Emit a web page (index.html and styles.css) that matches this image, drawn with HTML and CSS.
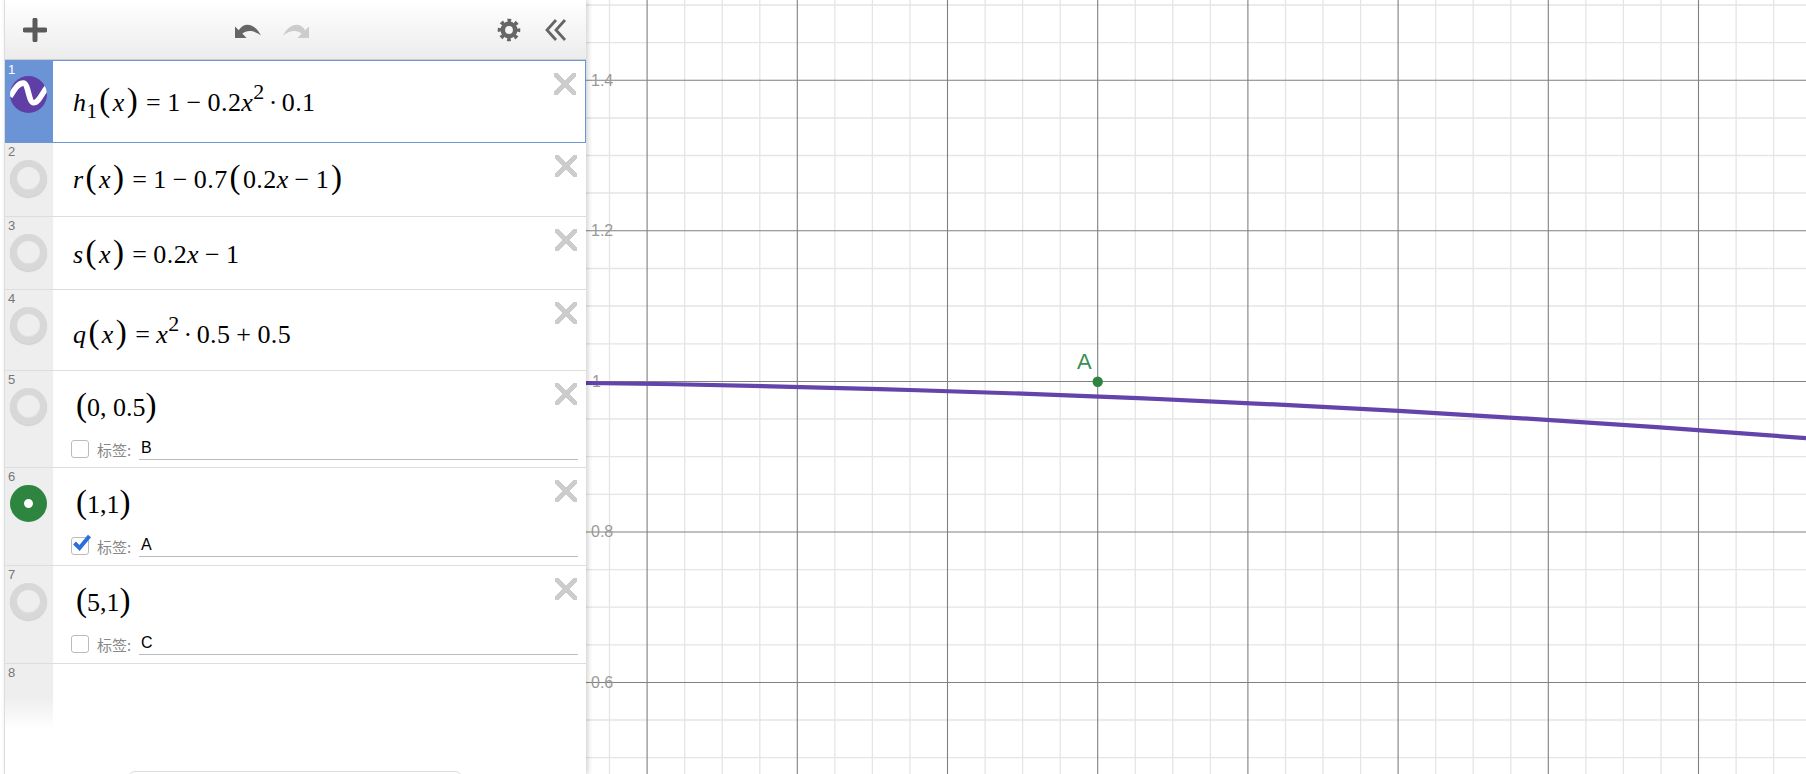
FILE: index.html
```html
<!DOCTYPE html>
<html lang="zh">
<head>
    <meta charset="UTF-8">
    <title>GeoGebra</title>
    <link rel="stylesheet" href="styles.css">
</head>
<body>
    <div class="app">
        <aside class="panel">
            <div class="toolbar">
                <svg class="tool-add" width="24" height="24" viewBox="0 0 24 24"><path d="M12 2V22M2 12H22" stroke="#5a5a5a" stroke-width="5" stroke-linecap="round"/></svg>
                <div class="tool-history">
                    <svg width="28" height="18" viewBox="0 0 28 18"><path d="M1 5.5V17H12.5L8.3 12.6C13 8.8 19.5 9 27 14.5C21.5 3.5 11 -0.5 4.8 9.2Z" fill="#666"/></svg>
                    <svg width="28" height="18" viewBox="0 0 28 18"><path d="M27 5.5V17H15.5L19.7 12.6C15 8.8 8.5 9 1 14.5C6.5 3.5 17 -0.5 23.2 9.2Z" fill="#ccc"/></svg>
                </div>
                <div class="tool-right">
                    <svg width="24" height="24" viewBox="0 0 24 24"><circle cx="12" cy="12" r="6.2" fill="none" stroke="#666" stroke-width="4.6"/><circle cx="12" cy="12" r="9.6" fill="none" stroke="#666" stroke-width="3.4" stroke-dasharray="3.77 3.77" stroke-dashoffset="1.9"/></svg>
                    <svg width="22" height="24" viewBox="0 0 22 24"><path d="M11 2L2 12L11 22M20 2L11 12L20 22" fill="none" stroke="#666" stroke-width="2.8"/></svg>
                </div>
            </div>

            <div class="row row-active h-83">
                <div class="gutter"><span class="num">1</span>
                    <span class="marble marble-func"><svg width="37" height="37" viewBox="0 0 36 36"><path d="M0 20C5 12 8 7 13 7C18 7 18 26 23 26C28 26 31 17 36 11" fill="none" stroke="#fff" stroke-width="5.5"/></svg></span>
                </div>
                <div class="body pad-27">
                    <div class="math"><i>h</i><sub>1</sub><span class="p">(</span><i>x</i><span class="p">)</span><span class="op">=</span>1<span class="op">−</span>0.2<i>x</i><sup>2</sup><span class="dot">·</span>0.1</div>
                </div>
                <span class="del"></span>
            </div>
            <div class="row h-74">
                <div class="gutter"><span class="num">2</span><span class="marble"></span></div>
                <div class="body pad-22">
                    <div class="math"><i>r</i><span class="p">(</span><i>x</i><span class="p">)</span><span class="op">=</span>1<span class="op">−</span>0.7<span class="p">(</span>0.2<i>x</i><span class="op">−</span>1<span class="p">)</span></div>
                </div>
                <span class="del"></span>
            </div>
            <div class="row h-73">
                <div class="gutter"><span class="num">3</span><span class="marble"></span></div>
                <div class="body pad-23">
                    <div class="math"><i>s</i><span class="p">(</span><i>x</i><span class="p">)</span><span class="op">=</span>0.2<i>x</i><span class="op">−</span>1</div>
                </div>
                <span class="del"></span>
            </div>
            <div class="row h-81">
                <div class="gutter"><span class="num">4</span><span class="marble"></span></div>
                <div class="body pad-30">
                    <div class="math"><i>q</i><span class="p">(</span><i>x</i><span class="p">)</span><span class="op">=</span><i>x</i><sup>2</sup><span class="dot">·</span>0.5<span class="op">+</span>0.5</div>
                </div>
                <span class="del"></span>
            </div>
            <div class="row h-97">
                <div class="gutter"><span class="num">5</span><span class="marble"></span></div>
                <div class="body pad-22">
                    <div class="math point"><span class="p">(</span>0,&nbsp;0.5<span class="p">)</span></div>
                    <div class="caption"><span class="check"></span><span class="caption-text">标签:</span><span class="caption-input">B</span></div>
                </div>
                <span class="del"></span>
            </div>
            <div class="row h-98">
                <div class="gutter"><span class="num">6</span><span class="marble marble-on"></span></div>
                <div class="body pad-22">
                    <div class="math point"><span class="p">(</span>1,1<span class="p">)</span></div>
                    <div class="caption"><span class="check"><svg class="tick" width="20" height="18" viewBox="0 0 20 18"><path d="M2.5 9L7.5 14L17.5 2" fill="none" stroke="#2b6fdc" stroke-width="4"/></svg></span><span class="caption-text">标签:</span><span class="caption-input">A</span></div>
                </div>
                <span class="del"></span>
            </div>
            <div class="row h-98">
                <div class="gutter"><span class="num">7</span><span class="marble"></span></div>
                <div class="body pad-22">
                    <div class="math point"><span class="p">(</span>5,1<span class="p">)</span></div>
                    <div class="caption"><span class="check"></span><span class="caption-text">标签:</span><span class="caption-input">C</span></div>
                </div>
                <span class="del"></span>
            </div>
            <div class="row-last">
                <div class="gutter gutter-fade"><span class="num">8</span></div>
            </div>
            <div class="help-btn"></div>
        </aside>

        <main class="graph">
            <svg class="plot" width="1220" height="774" viewBox="586 0 1220 774">
                <path class="grid-minor" d="M609.5 0V774M684.7 0V774M722.2 0V774M759.8 0V774M834.9 0V774M872.4 0V774M910 0V774M985.1 0V774M1022.6 0V774M1060.2 0V774M1135.3 0V774M1172.8 0V774M1210.4 0V774M1285.5 0V774M1323 0V774M1360.6 0V774M1435.7 0V774M1473.2 0V774M1510.8 0V774M1585.9 0V774M1623.4 0V774M1661 0V774M1736.1 0V774M1773.6 0V774"/>
                <path class="grid-minor" d="M586 5H1806M586 42.7H1806M586 118H1806M586 155.5H1806M586 193H1806M586 268.5H1806M586 306H1806M586 343.8H1806M586 419H1806M586 456.7H1806M586 494.3H1806M586 569.6H1806M586 607.2H1806M586 644.8H1806M586 720H1806M586 757.7H1806"/>
                <path class="grid-major" d="M647.1 0V774M797.3 0V774M947.5 0V774M1097.7 0V774M1247.9 0V774M1398.1 0V774M1548.3 0V774M1698.5 0V774"/>
                <path class="grid-major" d="M586 80.3H1806M586 230.8H1806M586 381.5H1806M586 532H1806M586 682.5H1806"/>
                <text class="axis-label" x="591" y="86">1.4</text>
                <text class="axis-label" x="591" y="236">1.2</text>
                <text class="axis-label" x="592" y="387">1</text>
                <text class="axis-label" x="591" y="537">0.8</text>
                <text class="axis-label" x="591" y="688">0.6</text>
                <path class="curve" d="M586 383Q1196 390.8 1806 438.2"/>
                <circle class="pt" cx="1097.7" cy="381.7" r="5.2"/>
                <text class="pt-label" x="1077" y="369">A</text>
            </svg>
        </main>
    </div>
</body>
</html>
```

FILE: styles.css
```css
html, body {
    margin: 0;
    padding: 0;
    height: 100%;
    background: #fff;
    overflow: hidden;
}
.app {
    display: flex;
    width: 1806px;
    height: 774px;
    padding-left: 4px;
    box-sizing: border-box;
}
.panel {
    position: relative;
    z-index: 2;
    width: 582px;
    flex: none;
    height: 774px;
    overflow: hidden;
    background: #fff;
    border-left: 1px solid #ddd;
    box-sizing: border-box;
    box-shadow: 2px 0 5px rgba(0, 0, 0, 0.18);
}

/* toolbar */
.toolbar {
    display: flex;
    align-items: center;
    height: 60px;
    box-sizing: border-box;
    padding: 0 19px 0 18px;
    background: linear-gradient(#fff, #ececec);
    border-bottom: 1px solid #ccc;
}
.tool-add {
    flex: none;
}
.tool-history {
    display: flex;
    gap: 20px;
    margin-left: 187px;
}
.tool-right {
    display: flex;
    align-items: center;
    gap: 24px;
    margin-left: auto;
}

/* rows */
.row {
    position: relative;
    display: flex;
    box-sizing: border-box;
    border-bottom: 1px solid #ddd;
}
.h-83 { height: 83px; }
.h-74 { height: 74px; }
.h-73 { height: 73px; }
.h-81 { height: 81px; }
.h-97 { height: 97px; }
.h-98 { height: 98px; }
.pad-22 { padding-top: 22px; }
.pad-23 { padding-top: 23px; }
.pad-27 { padding-top: 27px; }
.pad-30 { padding-top: 30px; }

.row-active {
    border: 1px solid #6c95d6;
    margin-left: -1px;
}
.gutter {
    position: relative;
    flex: none;
    width: 48px;
    background: #eeeeee;
}
.row-active .gutter {
    background: #6a94d6;
    width: 48px;
}
.gutter-fade {
    height: 66px;
    background: linear-gradient(#eee 50%, #fff);
}
.num {
    display: block;
    padding: 2px 0 0 3px;
    font-family: "Liberation Sans", Arial, sans-serif;
    font-size: 13px;
    line-height: 13px;
    color: #777;
}
.row-active .num {
    color: #fff;
}
.marble {
    display: block;
    width: 37px;
    height: 37px;
    margin: 2px 0 0 5px;
    box-sizing: border-box;
    border-radius: 50%;
    border: 7px solid #d8d8d8;
    background: #eee;
    box-shadow: inset 0 -1px 1px #ddd, 0 1px 1px #ccc;
}
.marble-func {
    margin-top: 0;
    border: 0;
    overflow: hidden;
    background: #5f3ea6;
    box-shadow: none;
}
.marble-func svg {
    display: block;
}
.marble-on {
    border: 14px solid #2e8540;
    background: #fff;
    box-shadow: none;
}
.body {
    flex: 1;
    padding-left: 20px;
    padding-right: 8px;
    min-width: 0;
}
.del {
    position: absolute;
    top: 12px;
    right: 9px;
    width: 22px;
    height: 22px;
    background:
        linear-gradient(45deg, transparent 41%, #ccc 41%, #ccc 59%, transparent 59%),
        linear-gradient(-45deg, transparent 41%, #ccc 41%, #ccc 59%, transparent 59%);
}

/* math */
.math {
    font-family: "Liberation Serif", "Times New Roman", serif;
    font-size: 26px;
    line-height: 30px;
    height: 30px;
    letter-spacing: 0.4px;
    color: #000;
    white-space: nowrap;
}
.math i {
    font-style: italic;
}
.math sub, .math sup {
    line-height: 0;
}
.math sub {
    vertical-align: -7px;
    font-size: 21px;
}
.math sup {
    vertical-align: 12px;
    font-size: 22px;
}
.p {
    font-size: 33px;
    font-weight: normal;
    line-height: 0;
    margin: 0 2px;
}
.op {
    margin: 0 6px;
}
.dot {
    margin: 0 4px;
}
.point {
    padding-left: 3px;
    letter-spacing: 0;
}
.point .p {
    margin: 0;
}

/* caption row */
.caption {
    display: flex;
    align-items: flex-end;
    margin-top: 16px;
    font-family: "Liberation Sans", Arial, sans-serif;
}
.check {
    position: relative;
    flex: none;
    width: 18px;
    height: 18px;
    box-sizing: border-box;
    margin: 0 0 2px -2px;
    border: 1px solid #bbb;
    border-radius: 3px;
    background: #fff;
}
.tick {
    position: absolute;
    left: 0;
    top: -4px;
}
.caption-text {
    margin: 0 0 1px 8px;
    width: 42px;
    flex: none;
    font-family: "Noto Sans CJK SC", sans-serif;
    font-size: 15px;
    line-height: 18px;
    color: #888;
}
.caption-input {
    flex: 1;
    height: 21px;
    box-sizing: border-box;
    padding-left: 2px;
    border-bottom: 1px solid #bbb;
    font-size: 16px;
    line-height: 17px;
    color: #000;
}

.row-last {
    height: 67px;
}
.help-btn {
    width: 336px;
    height: 30px;
    box-sizing: border-box;
    margin: 40px 0 0 122px;
    border: 1px solid #ddd;
    border-radius: 8px;
    background: #fff;
}

/* graphics view */
.graph {
    flex: 1;
    min-width: 0;
}
.plot {
    display: block;
}
.grid-minor {
    fill: none;
    stroke: #e5e5e5;
    stroke-width: 1.3;
}
.grid-major {
    fill: none;
    stroke: #808080;
    stroke-width: 1.1;
}
.axis-label {
    font-family: "Liberation Sans", Arial, sans-serif;
    font-size: 16px;
    fill: #999;
}
.curve {
    fill: none;
    stroke: #6443aa;
    stroke-width: 4.2;
}
.pt {
    fill: #2e8540;
}
.pt-label {
    font-family: "Liberation Sans", Arial, sans-serif;
    font-size: 22px;
    fill: #3a8f52;
}
```
